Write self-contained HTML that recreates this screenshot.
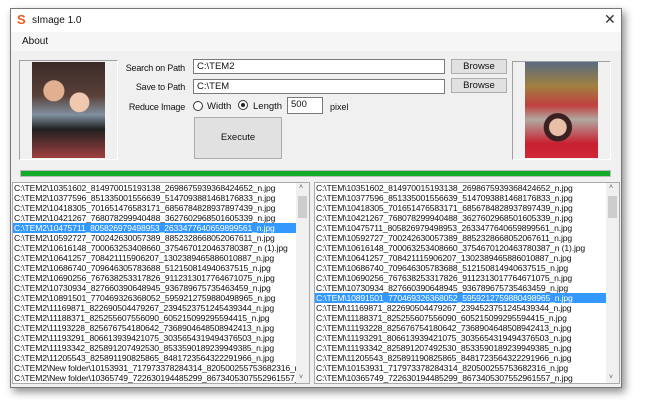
<!DOCTYPE html>
<html><head><style>
*{margin:0;padding:0;box-sizing:border-box}
body{width:650px;height:419px;background:#fff;position:relative;overflow:hidden;font-family:"Liberation Sans",sans-serif;font-size:9px;color:#111}
.a{position:absolute}
.win{left:10px;top:8px;width:612px;height:380px;background:#f0f0f0;border:1px solid #777;box-shadow:3px 4px 8px rgba(0,0,0,.45)}
.tb{border:1px solid #7a7a7a;background:#fff;padding:1px 3px;font-size:9.5px}
.btn{border:1px solid #adadad;background:#e1e1e1;text-align:center;font-size:9.5px}
.lbl{right:465px;font-size:9px;letter-spacing:-0.2px;text-align:right}
.list{background:#fff;border:1px solid #aaa;overflow:hidden;font-size:8.6px;line-height:10px;letter-spacing:-0.15px}
.list div{padding-left:1px;white-space:nowrap;height:10px}
.sel{background:#3399ff;color:#fff}
.sb{background:#f0f0f0}
</style></head><body>
<div class="a win"></div>
<div class="a" style="left:11px;top:9px;width:610px;height:23px;background:#fff"></div>
<div class="a" style="left:17px;top:12px;color:#f05a1a;font-weight:bold;font-size:13px">S</div>
<div class="a" style="left:32px;top:15px;font-size:10px">sImage 1.0</div>
<div class="a" style="left:604px;top:11px;font-size:14px;color:#333">✕</div>
<div class="a" style="left:11px;top:32px;width:610px;height:19px;background:#f6f6f6"></div>
<div class="a" style="left:22px;top:36px;font-size:10px">About</div>

<div class="a" style="left:19px;top:60px;width:99px;height:100px;border:1px solid #a0a0a0;border-bottom-color:#fff;border-right-color:#fff"></div>
<div class="a" style="left:32px;top:62px;width:73px;height:96px;background:radial-gradient(circle at 30% 30%,#e0b090 0 12%,transparent 13%),radial-gradient(circle at 65% 42%,#f0c8b0 0 13%,transparent 14%),linear-gradient(180deg,#3a2a28 0%,#5a4038 35%,#8090a0 55%,#202020 70%,#a04040 100%)"></div>
<div class="a" style="left:512px;top:61px;width:99px;height:99px;border:1px solid #a0a0a0;border-bottom-color:#fff;border-right-color:#fff"></div>
<div class="a" style="left:525px;top:62px;width:73px;height:96px;background:radial-gradient(circle at 45% 68%,#e8c0a8 0 11%,#3a2020 12% 18%,transparent 19%),linear-gradient(180deg,#5a6a80 0%,#a08040 25%,#c04040 45%,#b0a8a0 60%,#c82030 85%,#d02838 100%)"></div>

<div class="a lbl" style="top:63px">Search on Path</div>
<div class="a lbl" style="top:82px">Save to Path</div>
<div class="a lbl" style="top:102px">Reduce Image</div>
<div class="a tb" style="left:193px;top:59px;width:252px;height:15px">C:\TEM2</div>
<div class="a tb" style="left:193px;top:79px;width:252px;height:15px">C:\TEM</div>
<div class="a btn" style="left:451px;top:59px;width:56px;height:15px;line-height:13px">Browse</div>
<div class="a btn" style="left:451px;top:78px;width:56px;height:15px;line-height:13px">Browse</div>
<div class="a" style="left:193px;top:101px;width:10px;height:10px;border:1px solid #333;border-radius:50%;background:#fff"></div>
<div class="a" style="left:207px;top:101px;font-size:9.5px">Width</div>
<div class="a" style="left:238px;top:100px;width:10px;height:10px;border:1px solid #333;border-radius:50%;background:#fff"></div>
<div class="a" style="left:241px;top:103px;width:4px;height:4px;border-radius:50%;background:#222"></div>
<div class="a" style="left:253px;top:101px;font-size:9.5px">Length</div>
<div class="a tb" style="left:287px;top:97px;width:36px;height:17px">500</div>
<div class="a" style="left:330px;top:102px;font-size:9px">pixel</div>
<div class="a btn" style="left:194px;top:117px;width:88px;height:42px;line-height:40px">Execute</div>

<div class="a" style="left:20px;top:170px;width:591px;height:7px;background:#13aa2a;border:1px solid #bcbcbc"></div>

<div class="a list" style="left:12px;top:182px;width:298px;height:202px">
<div>C:\TEM2\10351602_814970015193138_2698675939368424652_n.jpg</div>
<div>C:\TEM2\10377596_851335001556639_5147093881468176833_n.jpg</div>
<div>C:\TEM2\10418305_701651476583171_6856784828937897439_n.jpg</div>
<div>C:\TEM2\10421267_768078299940488_3627602968501605339_n.jpg</div>
<div class="sel" style="width:285px">C:\TEM2\10475711_805826979498953_2633477640659899561_n.jpg</div>
<div>C:\TEM2\10592727_700242630057389_8852328668052067611_n.jpg</div>
<div>C:\TEM2\10616148_700063253408660_3754670120463780387_n (1).jpg</div>
<div>C:\TEM2\10641257_708421115906207_1302389465886010887_n.jpg</div>
<div>C:\TEM2\10686740_709646305783688_512150814940637515_n.jpg</div>
<div>C:\TEM2\10690256_767638253317826_9112313017764671075_n.jpg</div>
<div>C:\TEM2\10730934_827660390648945_936789675735463459_n.jpg</div>
<div>C:\TEM2\10891501_770469326368052_5959212759880498965_n.jpg</div>
<div>C:\TEM2\11169871_822690504479267_2394523751245439344_n.jpg</div>
<div>C:\TEM2\11188371_825255607556090_605215099295594415_n.jpg</div>
<div>C:\TEM2\11193228_825676754180642_7368904648508942413_n.jpg</div>
<div>C:\TEM2\11193291_806613939421075_3035654319494376503_n.jpg</div>
<div>C:\TEM2\11193342_825891207492530_8533590189239949385_n.jpg</div>
<div>C:\TEM2\11205543_825891190825865_8481723564322291966_n.jpg</div>
<div>C:\TEM2\New folder\10153931_717973378284314_820500255753682316_n.jpg</div>
<div>C:\TEM2\New folder\10365749_722630194485299_8673405307552961557_n.jpg</div>
</div>
<div class="a sb" style="left:296px;top:183px;width:13px;height:200px"></div>
<div class="a" style="left:298px;top:196px;width:9px;height:22px;background:#cdcdcd"></div>
<div class="a" style="left:299px;top:184px;font-size:7px;color:#555">˄</div>
<div class="a" style="left:299px;top:374px;font-size:7px;color:#555">˅</div>

<div class="a list" style="left:314px;top:182px;width:306px;height:202px">
<div>C:\TEM\10351602_814970015193138_2698675939368424652_n.jpg</div>
<div>C:\TEM\10377596_851335001556639_5147093881468176833_n.jpg</div>
<div>C:\TEM\10418305_701651476583171_6856784828937897439_n.jpg</div>
<div>C:\TEM\10421267_768078299940488_3627602968501605339_n.jpg</div>
<div>C:\TEM\10475711_805826979498953_2633477640659899561_n.jpg</div>
<div>C:\TEM\10592727_700242630057389_8852328668052067611_n.jpg</div>
<div>C:\TEM\10616148_700063253408660_3754670120463780387_n (1).jpg</div>
<div>C:\TEM\10641257_708421115906207_1302389465886010887_n.jpg</div>
<div>C:\TEM\10686740_709646305783688_512150814940637515_n.jpg</div>
<div>C:\TEM\10690256_767638253317826_9112313017764671075_n.jpg</div>
<div>C:\TEM\10730934_827660390648945_936789675735463459_n.jpg</div>
<div class="sel" style="width:292px">C:\TEM\10891501_770469326368052_5959212759880498965_n.jpg</div>
<div>C:\TEM\11169871_822690504479267_2394523751245439344_n.jpg</div>
<div>C:\TEM\11188371_825255607556090_605215099295594415_n.jpg</div>
<div>C:\TEM\11193228_825676754180642_7368904648508942413_n.jpg</div>
<div>C:\TEM\11193291_806613939421075_3035654319494376503_n.jpg</div>
<div>C:\TEM\11193342_825891207492530_8533590189239949385_n.jpg</div>
<div>C:\TEM\11205543_825891190825865_8481723564322291966_n.jpg</div>
<div>C:\TEM\10153931_717973378284314_820500255753682316_n.jpg</div>
<div>C:\TEM\10365749_722630194485299_8673405307552961557_n.jpg</div>
</div>
<div class="a sb" style="left:606px;top:183px;width:13px;height:200px"></div>
<div class="a" style="left:608px;top:196px;width:9px;height:22px;background:#cdcdcd"></div>
<div class="a" style="left:609px;top:184px;font-size:7px;color:#555">˄</div>
<div class="a" style="left:609px;top:374px;font-size:7px;color:#555">˅</div>
</body></html>
